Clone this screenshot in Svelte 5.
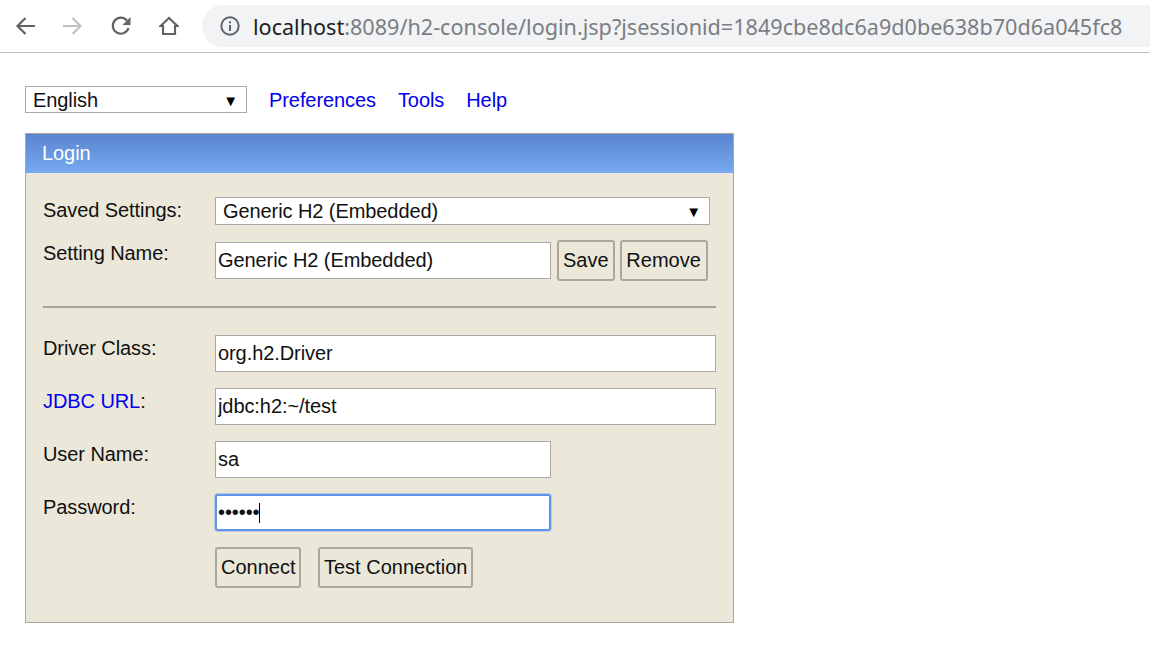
<script>
  let language = $state('English');
  let saved = $state('Generic H2 (Embedded)');
  let settingName = $state('Generic H2 (Embedded)');
  let driver = $state('org.h2.Driver');
  let url = $state('jdbc:h2:~/test');
  let user = $state('sa');
  let password = $state('secret');
</script>

<header class="toolbar">
  <svg class="icon back" viewBox="0 0 20 20"><path d="M20 10H2.500M10.500 2L2.500 10l8 8" /></svg>
  <svg class="icon forward" viewBox="0 0 20 20"><path d="M0 10h17.500M9.500 2l8 8-8 8" /></svg>
  <svg class="icon reload" viewBox="0 0 20 20"><path d="M17.500 12a8 8 0 1 1-1.600-7.500" /><path class="solid" d="M19.500 1v8h-8z" /></svg>
  <svg class="icon home" viewBox="0 0 20 20"><path d="M10 2L1.500 10H4v8h12v-8h2.500z" /></svg>
  <div class="omnibox">
    <svg class="info" viewBox="0 0 20 20">
      <circle cx="10" cy="10" r="8.700" />
      <path d="M10 9v6M10 5.200v2" />
    </svg>
    <span class="address"><b>localhost</b>:8089/h2-console/login.jsp?jsessionid=1849cbe8dc6a9d0be638b70d6a045fc8</span>
  </div>
</header>

<main class="page">
  <nav class="nav">
    <div class="select-wrap lang">
      <select bind:value={language}>
        <option>English</option>
      </select>
      <span class="arrow">▼</span>
    </div>
    <a href="#prefs">Preferences</a>
    <a href="#tools">Tools</a>
    <a href="#help">Help</a>
  </nav>

  <section class="login">
    <h1>Login</h1>
    <form class="body">
      <div class="row first">
        <label for="saved">Saved Settings:</label>
        <div class="select-wrap saved">
          <select id="saved" bind:value={saved}>
            <option>Generic H2 (Embedded)</option>
          </select>
          <span class="arrow">▼</span>
        </div>
      </div>

      <div class="row setting">
        <label for="name">Setting Name:</label>
        <div class="controls">
          <input id="name" class="short" bind:value={settingName} />
          <button type="button">Save</button>
          <button type="button" class="remove">Remove</button>
        </div>
      </div>

      <hr />

      <div class="row">
        <label for="driver">Driver Class:</label>
        <input id="driver" bind:value={driver} />
      </div>
      <div class="row next">
        <label for="url"><a href="#url">JDBC URL</a>:</label>
        <input id="url" bind:value={url} />
      </div>
      <div class="row next">
        <label for="user">User Name:</label>
        <input id="user" class="short" bind:value={user} />
      </div>
      <div class="row next">
        <label for="password">Password:</label>
        <div class="caret-wrap">
          <input id="password" class="short focused" type="password" bind:value={password} />
          <span class="caret"></span>
        </div>
      </div>
      <div class="row next">
        <span></span>
        <div class="actions">
          <button type="button" class="connect">Connect</button>
          <button type="button">Test Connection</button>
        </div>
      </div>
    </form>
  </section>
</main>

<style>
  :global(body) {
    background: #fff;
    font-family: "Liberation Sans", Arial, sans-serif;
    font-size: 20px;
    letter-spacing: -0.08px;
    color: #111;
  }

  .toolbar {
    display: flex;
    align-items: center;
    height: 52px;
    border-bottom: 1px solid #bdbdbd;
    padding-left: 15px;
    box-sizing: content-box;
  }
  .icon {
    width: 20px;
    height: 20px;
    fill: none;
    stroke: #5f6368;
    stroke-width: 2.2;
    flex: none;
  }
  .icon .solid { fill: #5f6368; stroke: none; }
  .forward { margin-left: 28px; stroke: #bdc1c6; }
  .reload { margin-left: 28px; }
  .home { margin-left: 28px; }
  .omnibox {
    display: flex;
    align-items: center;
    height: 42px;
    flex: 1;
    margin-left: 23px;
    padding-left: 18px;
    background: #f1f3f4;
    border-radius: 21px 0 0 21px;
    overflow: hidden;
  }
  .info {
    width: 20px;
    height: 20px;
    fill: none;
    stroke: #5f6368;
    stroke-width: 2;
    flex: none;
  }
  .address {
    margin-left: 13px;
    font-family: "Noto Sans", sans-serif;
    font-size: 21.6px;
    letter-spacing: 0;
    color: #7a7e83;
    white-space: nowrap;
  }
  .address b { font-weight: 400; color: #202124; }

  .page { padding: 33px 0 0 25px; }

  .nav {
    display: flex;
    align-items: center;
    gap: 22px;
    height: 27px;
  }
  .nav a { padding-top: 2px; }
  a { color: #0000ee; text-decoration: none; }

  .select-wrap { position: relative; }
  .select-wrap select {
    appearance: none;
    display: block;
    width: 100%;
    height: 100%;
    box-sizing: border-box;
    border: 1px solid #a9a9a9;
    border-radius: 0;
    background: #fff;
    padding: 0 0 0 7px;
    font: inherit;
    letter-spacing: inherit;
    color: #111;
  }
  .arrow {
    position: absolute;
    right: 9px;
    top: 50%;
    transform: translateY(-50%);
    font-size: 15px;
    color: #000;
    pointer-events: none;
  }
  .lang { width: 222px; height: 27px; }
  .saved { width: 495px; height: 28px; }

  .login {
    width: 709px;
    box-sizing: border-box;
    margin-top: 20px;
    border: 1px solid #aca899;
    background: #ebe8da;
  }
  h1 {
    margin: 0;
    height: 39px;
    padding-left: 16px;
    font-size: 20px;
    font-weight: 400;
    line-height: 38px;
    color: #fff;
    background: linear-gradient(#5a85d0, #76aaf0);
  }
  .body { padding: 24px 17px 34px 17px; }

  .row {
    display: grid;
    grid-template-columns: 172px 1fr;
  }
  .setting { margin-top: 15px; }
  .next { margin-top: 16px; }
  label { line-height: 26px; }

  .controls {
    display: flex;
    align-items: center;
    gap: 6px;
  }
  .remove { width: 88px; margin-left: -1px; }
  .actions {
    display: flex;
    gap: 17px;
  }
  .connect { width: 86px; }

  input {
    display: block;
    width: 100%;
    height: 37px;
    box-sizing: border-box;
    border: 1px solid #a9a9a9;
    border-radius: 0;
    background: #fff;
    padding: 0 2px;
    font: inherit;
    letter-spacing: inherit;
    color: #111;
    outline: none;
  }
  input.short { width: 336px; flex: none; }
  .focused {
    border: 2px solid #6093ea;
    border-radius: 3px;
    padding: 0 1px;
    box-shadow: 0 0 0 1px rgba(96, 147, 234, 0.35);
  }
  .caret-wrap { position: relative; }
  .caret {
    position: absolute;
    left: 44px;
    top: 9px;
    width: 1px;
    height: 20px;
    background: #000;
  }

  button {
    height: 41px;
    box-sizing: border-box;
    padding: 0 4px;
    border: 2px solid #aca899;
    border-radius: 3px;
    background: #ebe8da;
    font: inherit;
    letter-spacing: 0;
    color: #111;
  }

  hr {
    height: 2px;
    margin: 25px 0 27px;
    border: 0;
    background: #a5a5a0;
  }
</style>
